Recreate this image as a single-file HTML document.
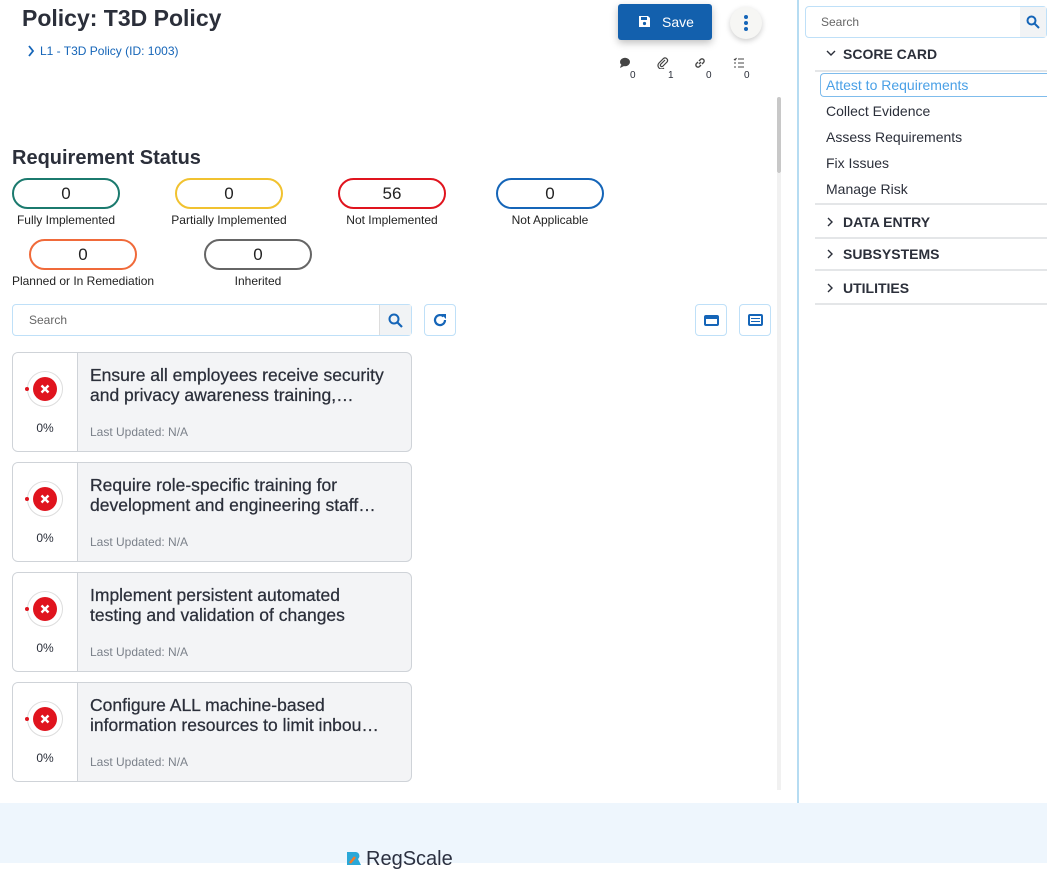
<!DOCTYPE html>
<html><head><style>
body{margin:0;width:1047px;height:863px;position:relative;overflow:hidden;background:#fff;font-family:"Liberation Sans",sans-serif;color:#2b2f3a}
.a{position:absolute}
.pill{position:absolute;width:104px;height:27px;border:2px solid;border-radius:16px;text-align:center;line-height:27px;font-size:17px;color:#222}
.lbl{position:absolute;font-size:12px;color:#222;text-align:center;width:170px}
.card{position:absolute;left:12px;width:398px;height:98px;border:1px solid #cfd3d8;border-radius:6px;background:#f3f4f6;overflow:hidden}
.card .l{position:absolute;left:0;top:0;width:64px;height:98px;background:#fff;border-right:1px solid #cfd3d8}
.card .ring{position:absolute;left:14px;top:18px;width:34px;height:34px;border:1px solid #ddd;border-radius:50%}
.card .x{position:absolute;left:5px;top:5px;width:24px;height:24px;border-radius:50%;background:#e0141e}
.card .dot{position:absolute;left:12px;top:34px;width:4px;height:4px;border-radius:50%;background:#e0141e}
.card .pc{position:absolute;left:0;width:64px;top:68px;text-align:center;font-size:12px}
.card .t{position:absolute;left:77px;top:12px;width:302px;font-size:17.5px;line-height:20px;color:#2b2f3a;-webkit-text-stroke:0.25px #2b2f3a}
.card .u{position:absolute;left:77px;top:72px;font-size:12px;color:#7b818a}
.ib{position:absolute;width:30px;height:30px;border:1px solid #bfe0f8;border-radius:4px;background:#fff}
.nav{position:absolute;left:826px;font-size:14px;color:#2b2f3a}
.sec{position:absolute;left:815px;width:232px;height:33px;border-bottom:2px solid #e4e6e8;font-size:14px;font-weight:bold;color:#2b2f3a}
.sec span{position:absolute;left:28px;top:9px}
.sec svg{position:absolute;left:11px;top:12px}
</style></head><body>
<div class="a" style="left:22px;top:5px;font-size:23px;font-weight:bold;color:#2b2f3a">Policy: T3D Policy</div>
<svg class="a" style="left:27px;top:45px" width="8" height="12"><path d="M2 1l4 5-4 5" stroke="#1565b8" stroke-width="1.8" fill="none"/></svg>
<div class="a" style="left:40px;top:44px;font-size:12px;color:#1565b8">L1 - T3D Policy (ID: 1003)</div>
<div class="a" style="left:618px;top:4px;width:94px;height:36px;background:#1360ad;border-radius:3px;box-shadow:0 3px 8px rgba(0,0,0,.25);color:#fff;font-size:14px;line-height:36px"><svg class="a" style="left:20px;top:11px" width="13" height="13" viewBox="0 0 13 13"><path d="M1 1h9l2 2v9H1z" fill="#fff"/><rect x="3" y="2" width="6" height="3" fill="#1360ad"/><circle cx="6.5" cy="8.5" r="1.6" fill="#1360ad"/></svg><span style="position:absolute;left:44px">Save</span></div>
<div class="a" style="left:730px;top:7px;width:32px;height:32px;border-radius:50%;background:#f6f6f4;box-shadow:0 2px 6px rgba(0,0,0,.2)"><div class="a" style="left:14px;top:8px;width:4px;height:4px;border-radius:50%;background:#1565b8;box-shadow:0 6px 0 #1565b8,0 12px 0 #1565b8"></div></div>
<svg class="a" style="left:619px;top:57px" width="12" height="12"><ellipse cx="6" cy="5" rx="5" ry="4.3" fill="#444"/><path d="M2 8l-1 3 4-2z" fill="#444"/></svg>
<svg class="a" style="left:657px;top:57px" width="12" height="12"><path d="M8 3L3.5 7.5a1.5 1.5 0 0 0 2 2L10 5a2.5 2.5 0 0 0-3.5-3.5L2 6a3.5 3.5 0 0 0 5 5" stroke="#444" stroke-width="1.2" fill="none"/></svg>
<svg class="a" style="left:694px;top:57px" width="12" height="12"><path d="M5 7l2-2M4 5L2.5 6.5a2 2 0 0 0 3 3L7 8M8 7l1.5-1.5a2 2 0 0 0-3-3L5 4" stroke="#444" stroke-width="1.4" fill="none"/></svg>
<svg class="a" style="left:733px;top:57px" width="12" height="12"><path d="M5 2h6M5 6h6M5 10h6M1 2l1 1 1.5-2M1 6h2M1 10h2" stroke="#444" stroke-width="1.1" fill="none"/></svg>
<div class="a" style="left:630px;top:70px;font-size:10px">0</div><div class="a" style="left:668px;top:70px;font-size:10px">1</div><div class="a" style="left:706px;top:70px;font-size:10px">0</div><div class="a" style="left:744px;top:70px;font-size:10px">0</div>
<div class="a" style="left:777px;top:97px;width:4px;height:76px;background:#c8c8c8;border-radius:2px"></div>
<div class="a" style="left:777px;top:173px;width:4px;height:617px;background:#f1f1f1"></div>
<div class="a" style="left:12px;top:147px;font-size:20px;font-weight:bold">Requirement Status</div>
<div class="pill" style="left:12px;top:178px;border-color:#1b7a6e">0</div>
<div class="pill" style="left:175px;top:178px;border-color:#f1c230">0</div>
<div class="pill" style="left:338px;top:178px;border-color:#e0141e">56</div>
<div class="pill" style="left:496px;top:178px;border-color:#1565b8">0</div>
<div class="pill" style="left:29px;top:239px;border-color:#f06a3a">0</div>
<div class="pill" style="left:204px;top:239px;border-color:#666">0</div>
<div class="lbl" style="left:-19px;top:213px">Fully Implemented</div>
<div class="lbl" style="left:144px;top:213px">Partially Implemented</div>
<div class="lbl" style="left:307px;top:213px">Not Implemented</div>
<div class="lbl" style="left:465px;top:213px">Not Applicable</div>
<div class="lbl" style="left:-2px;top:274px">Planned or In Remediation</div>
<div class="lbl" style="left:173px;top:274px">Inherited</div>
<div class="a" style="left:12px;top:304px;width:398px;height:30px;border:1px solid #bfe0f8;border-radius:4px;background:#fff"><span class="a" style="left:16px;top:8px;font-size:12px;color:#666">Search</span><div class="a" style="right:0;top:0;width:31px;height:30px;background:#f1f3f5;border-left:1px solid #ddd"><svg class="a" style="left:8px;top:8px" width="15" height="15"><circle cx="6" cy="6" r="4.5" stroke="#1565b8" stroke-width="2" fill="none"/><path d="M9.5 9.5L14 14" stroke="#1565b8" stroke-width="2.2"/></svg></div></div>
<div class="ib" style="left:424px;top:304px"><svg class="a" style="left:7px;top:7px" width="16" height="16"><path d="M13 8A5 5 0 1 1 11.5 4.5" stroke="#1565b8" stroke-width="2.2" fill="none"/><path d="M9 2h5v5z" fill="#1565b8"/></svg></div>
<div class="ib" style="left:695px;top:304px"><div class="a" style="left:8px;top:10px;width:15px;height:11px;border:2px solid #1565b8;border-top-width:4px;box-sizing:border-box;border-radius:2px"></div></div>
<div class="ib" style="left:739px;top:304px"><div class="a" style="left:8px;top:9px;width:15px;height:12px;border:2px solid #1565b8;box-sizing:border-box;border-radius:2px"></div><div class="a" style="left:11px;top:13px;width:9px;height:1px;background:#1565b8;box-shadow:0 3px 0 #1565b8"></div></div>
<div class="card" style="top:352px"><div class="l"><div class="ring"><div class="x"><svg width="24" height="24"><path d="M8.5 8.5l7 7M15.5 8.5l-7 7" stroke="#fff" stroke-width="2.4"/></svg></div></div><div class="dot"></div><div class="pc">0%</div></div><div class="t">Ensure all employees receive security and privacy awareness training,…</div><div class="u">Last Updated: N/A</div></div>
<div class="card" style="top:462px"><div class="l"><div class="ring"><div class="x"><svg width="24" height="24"><path d="M8.5 8.5l7 7M15.5 8.5l-7 7" stroke="#fff" stroke-width="2.4"/></svg></div></div><div class="dot"></div><div class="pc">0%</div></div><div class="t">Require role-specific training for development and engineering staff…</div><div class="u">Last Updated: N/A</div></div>
<div class="card" style="top:572px"><div class="l"><div class="ring"><div class="x"><svg width="24" height="24"><path d="M8.5 8.5l7 7M15.5 8.5l-7 7" stroke="#fff" stroke-width="2.4"/></svg></div></div><div class="dot"></div><div class="pc">0%</div></div><div class="t">Implement persistent automated<br>testing and validation of changes</div><div class="u">Last Updated: N/A</div></div>
<div class="card" style="top:682px"><div class="l"><div class="ring"><div class="x"><svg width="24" height="24"><path d="M8.5 8.5l7 7M15.5 8.5l-7 7" stroke="#fff" stroke-width="2.4"/></svg></div></div><div class="dot"></div><div class="pc">0%</div></div><div class="t">Configure ALL machine-based information resources to limit inbou…</div><div class="u">Last Updated: N/A</div></div>
<div class="a" style="left:797px;top:0;width:2px;height:803px;background:#b6dcf2"></div>
<div class="a" style="left:805px;top:6px;width:240px;height:30px;border:1px solid #bfe0f8;border-radius:4px;background:#fff"><span class="a" style="left:15px;top:8px;font-size:12px;color:#666">Search</span><div class="a" style="right:0;top:0;width:26px;height:30px;background:#f1f3f5"><svg class="a" style="left:6px;top:8px" width="14" height="14"><circle cx="5.5" cy="5.5" r="4" stroke="#1565b8" stroke-width="2" fill="none"/><path d="M8.5 8.5L13 13" stroke="#1565b8" stroke-width="2"/></svg></div></div>
<div class="sec" style="top:37px"><svg width="10" height="8"><path d="M1 2l4 4 4-4" stroke="#2b2f3a" stroke-width="1.4" fill="none"/></svg><span>SCORE CARD</span></div>
<div class="a" style="left:820px;top:73px;width:227px;height:22px;border:1px solid #7fbcec;border-right:none;border-radius:4px 0 0 4px"></div>
<div class="nav" style="top:77px;color:#4aa0e6">Attest to Requirements</div>
<div class="nav" style="top:103px">Collect Evidence</div>
<div class="nav" style="top:129px">Assess Requirements</div>
<div class="nav" style="top:155px">Fix Issues</div>
<div class="nav" style="top:181px">Manage Risk</div>
<div class="sec" style="top:203px;border-top:2px solid #e4e6e8;height:32px"><svg width="8" height="10"><path d="M2 1l4 4-4 4" stroke="#2b2f3a" stroke-width="1.4" fill="none"/></svg><span>DATA ENTRY</span></div>
<div class="sec" style="top:237px;height:32px"><svg width="8" height="10"><path d="M2 1l4 4-4 4" stroke="#2b2f3a" stroke-width="1.4" fill="none"/></svg><span>SUBSYSTEMS</span></div>
<div class="sec" style="top:271px;height:32px"><svg width="8" height="10"><path d="M2 1l4 4-4 4" stroke="#2b2f3a" stroke-width="1.4" fill="none"/></svg><span>UTILITIES</span></div>
<div class="a" style="left:0;top:803px;width:1047px;height:60px;background:#eef6fd"></div>
<svg class="a" style="left:346px;top:851px" width="15" height="14"><path d="M1 1h9a4 4 0 0 1 2 7l3 6H1z" fill="#2aa8d8"/><path d="M4 12l5-6" stroke="#f37a2a" stroke-width="2.5"/></svg>
<div class="a" style="left:366px;top:848px;font-size:20px;color:#2b3040">RegScale</div>
</body></html>
